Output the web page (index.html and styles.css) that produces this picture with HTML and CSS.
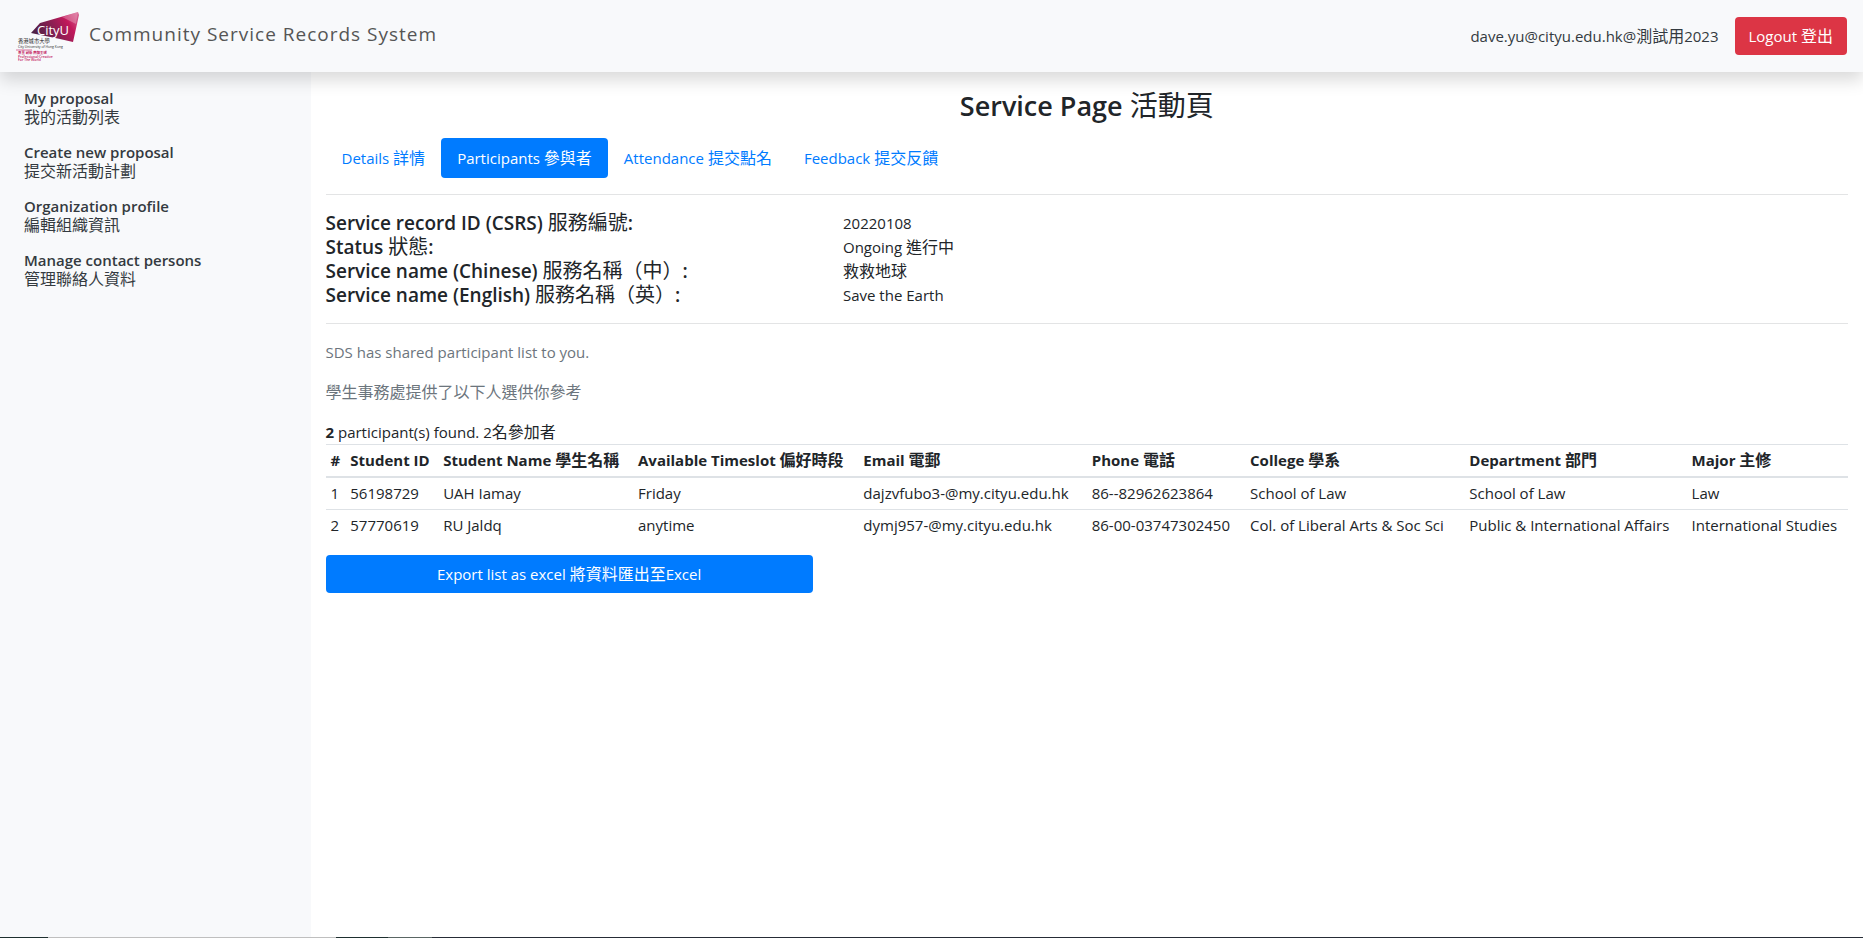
FILE: index.html
```html
<!DOCTYPE html>
<html lang="en">
<head>
<meta charset="utf-8">
<title>Community Service Records System</title>
<link rel="stylesheet" href="styles.css">
</head>
<body>
<header class="topbar">
  <a class="brand" href="#">
    <svg class="logo" viewBox="0 0 64 52" role="img" aria-label="CityU">
      <defs>
        <linearGradient id="gem" x1="0" y1="0.6" x2="1" y2="0.2">
          <stop offset="0" stop-color="#4a2145"/>
          <stop offset="0.45" stop-color="#8c1f52"/>
          <stop offset="0.75" stop-color="#c2185b"/>
          <stop offset="1" stop-color="#d45c8c"/>
        </linearGradient>
      </defs>
      <path d="M24 13L62 2L63 5L57 32L44 29L15 23Z" fill="url(#gem)"/>
      <path d="M46 7L62 2L60 14Z" fill="#f3c9d8" opacity="0.35"/>
      <text class="logo-name" x="21" y="25">CityU</text>
      <text class="logo-zh" x="2" y="33">香港城市大學</text>
      <text class="logo-en" x="2" y="38">City University of Hong Kong</text>
      <path d="M0 40H16" stroke="#c2185b" stroke-width="0.6"/>
      <text class="logo-motto" x="2" y="44">專業 創新 胸懷全球</text>
      <text class="logo-motto" x="2" y="48">Professional·Creative</text>
      <text class="logo-motto" x="2" y="51">For The World</text>
    </svg>
    <span class="brand-name">Community Service Records System</span>
  </a>
  <div class="account">
    <span>dave.yu@cityu.edu.hk@<span class="zh">測試用</span>2023</span>
    <button class="btn btn-danger" type="button">Logout <span class="zh">登出</span></button>
  </div>
</header>
<div class="layout">
  <nav class="sidebar" aria-label="Main">
    <a href="#">My proposal<span class="zh">我的活動列表</span></a>
    <a href="#">Create new proposal<span class="zh">提交新活動計劃</span></a>
    <a href="#">Organization profile<span class="zh">編輯組織資訊</span></a>
    <a href="#">Manage contact persons<span class="zh">管理聯絡人資料</span></a>
  </nav>
  <main class="content">
    <h1>Service Page <span class="zh">活動頁</span></h1>
    <nav class="pills" aria-label="Service">
      <a href="#">Details <span class="zh">詳情</span></a>
      <a class="active" href="#" aria-current="page">Participants <span class="zh">參與者</span></a>
      <a href="#">Attendance <span class="zh">提交點名</span></a>
      <a href="#">Feedback <span class="zh">提交反饋</span></a>
    </nav>
    <hr>
    <dl class="summary">
      <dt>Service record ID (CSRS) <span class="zh">服務編號</span>:</dt><dd>20220108</dd>
      <dt>Status <span class="zh">狀態</span>:</dt><dd>Ongoing <span class="zh">進行中</span></dd>
      <dt>Service name (Chinese) <span class="zh">服務名稱（中）</span>:</dt><dd><span class="zh">救救地球</span></dd>
      <dt>Service name (English) <span class="zh">服務名稱（英）</span>:</dt><dd>Save the Earth</dd>
    </dl>
    <hr>
    <p class="note">SDS has shared participant list to you.</p>
    <p class="note"><span class="zh">學生事務處提供了以下人選供你參考</span></p>
    <p class="count"><b>2</b> participant(s) found. 2<span class="zh">名參加者</span></p>
    <table>
      <colgroup>
        <col class="c-num"><col class="c-id"><col class="c-name"><col class="c-slot"><col class="c-email"><col class="c-phone"><col class="c-college"><col class="c-dept"><col class="c-major">
      </colgroup>
      <thead>
        <tr><th>#</th><th>Student ID</th><th>Student Name <span class="zh">學生名稱</span></th><th>Available Timeslot <span class="zh">偏好時段</span></th><th>Email <span class="zh">電郵</span></th><th>Phone <span class="zh">電話</span></th><th>College <span class="zh">學系</span></th><th>Department <span class="zh">部門</span></th><th>Major <span class="zh">主修</span></th></tr>
      </thead>
      <tbody>
        <tr><td>1</td><td>56198729</td><td>UAH Iamay</td><td>Friday</td><td>dajzvfubo3-@my.cityu.edu.hk</td><td>86--82962623864</td><td>School of Law</td><td>School of Law</td><td>Law</td></tr>
        <tr><td>2</td><td>57770619</td><td>RU Jaldq</td><td>anytime</td><td>dymj957-@my.cityu.edu.hk</td><td>86-00-03747302450</td><td>Col. of Liberal Arts &amp; Soc Sci</td><td>Public &amp; International Affairs</td><td>International Studies</td></tr>
      </tbody>
    </table>
    <div class="actions">
      <button class="btn btn-primary" type="button">Export list as excel <span class="zh">將資料匯出至</span>Excel</button>
    </div>
  </main>
</div>
<div class="edge"></div>
</body>
</html>
```

FILE: styles.css
```css
* { box-sizing: border-box; }

body {
  margin: 0;
  min-height: 100vh;
  display: flex;
  flex-direction: column;
  background: #fff;
  color: #212529;
  font: 15px/24px "Open Sans", "Noto Sans CJK TC", sans-serif;
}

a { text-decoration: none; }

.zh { font-size: 16px; line-height: 1; }

.topbar {
  position: relative;
  z-index: 1;
  display: flex;
  align-items: center;
  justify-content: space-between;
  height: 72px;
  padding: 0 16px;
  background: #f8f9fb;
  box-shadow: 0 8px 16px rgba(0, 0, 0, 0.15);
}

.brand {
  display: flex;
  align-items: center;
  gap: 9px;
  color: #555;
  font-size: 19px;
}

.brand-name { letter-spacing: 1px; margin-bottom: 4px; }

.logo { width: 64px; height: 52px; }
.logo-name { font: 13px "Open Sans", sans-serif; fill: #fff; }
.logo-zh { font: 5.3px "Noto Sans CJK TC", sans-serif; fill: #222; }
.logo-en { font: 3.4px "Open Sans", sans-serif; fill: #222; }
.logo-motto { font: 600 3.4px "Open Sans", "Noto Sans CJK TC", sans-serif; fill: #c2185b; }

.account { display: flex; align-items: center; gap: 16px; color: #343a40; }

.btn {
  height: 38px;
  padding: 0 14px;
  border: 0;
  border-radius: 4px;
  color: #fff;
  font: inherit;
  cursor: pointer;
}

.btn-danger { background: #dc3545; }
.btn-primary { width: 100%; background: #007bff; }

.layout {
  flex: 1;
  display: grid;
  grid-template-columns: 2fr 10fr;
}

.sidebar {
  display: flex;
  flex-direction: column;
  gap: 16px;
  padding: 17px 24px;
  background: #f8f9fb;
}

.sidebar a {
  color: #343a40;
  font-weight: 600;
  line-height: 19px;
}

.sidebar .zh { display: block; font-weight: 400; line-height: 19px; }

.content { min-width: 0; padding: 16px 15px; }

h1 {
  margin: 0 0 15px;
  font-size: 27px;
  font-weight: 600;
  line-height: 35px;
  text-align: center;
}

h1 .zh { font-size: 28px; font-weight: 400; }

.pills { display: flex; }

.pills a {
  padding: 8px 16px;
  border-radius: 4px;
  color: #007bff;
}

.pills .active { background: #007bff; color: #fff; }

hr { margin: 16px 0; border: 0; border-top: 1px solid #e3e4e5; }

.summary {
  display: grid;
  grid-template-columns: 1fr 2fr;
  column-gap: 15px;
  margin: 0;
}

.summary dt { font-size: 19px; font-weight: 600; }
.summary dt .zh { font-size: 20px; font-weight: 400; }
.summary dd { margin: 0; }

p { margin: 0; }
.note { margin-bottom: 16px; color: #6c757d; }

table { width: 100%; border-collapse: collapse; table-layout: fixed; }

th, td {
  padding: 4px 5px;
  border-top: 1px solid #dee2e6;
  text-align: left;
  white-space: nowrap;
  font-size: 15px;
  line-height: 23px;
}

th { font-weight: 700; border-bottom: 2px solid #dee2e6; }

.c-num { width: 1.3%; }
.c-id { width: 6.1%; }
.c-name { width: 12.8%; }
.c-slot { width: 14.8%; }
.c-email { width: 15%; }
.c-phone { width: 10.4%; }
.c-college { width: 14.4%; }
.c-dept { width: 14.6%; }
.c-major { width: 10.6%; }

.actions { width: 32%; margin-top: 14px; }

.edge {
  height: 1px;
  background: linear-gradient(to right, #1e2f2f 48px, #bfbfbf 48px 336px, #1e2f2f 336px 388px, #5a6664 388px 432px, #262c36 432px);
}
```
